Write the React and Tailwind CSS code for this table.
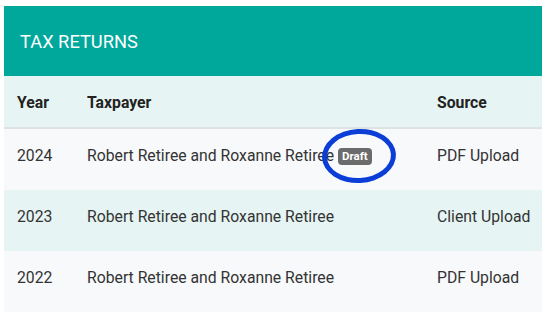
import React from 'react';

const returns = [
  { year: '2024', taxpayer: 'Robert Retiree and Roxanne Retiree', source: 'PDF Upload', draft: true },
  { year: '2023', taxpayer: 'Robert Retiree and Roxanne Retiree', source: 'Client Upload' },
  { year: '2022', taxpayer: 'Robert Retiree and Roxanne Retiree', source: 'PDF Upload' },
];

const cols = 'grid grid-cols-[70px_350px_1fr]';

const App = () => {
  return (
    <div className="w-[542px] h-[321px] bg-white pt-[6px] pl-[4px] font-['Roboto',sans-serif]">
      <div className="relative">
        {/* Header */}
        <div className="h-[70px] bg-[#00a79b] flex items-center px-4">
          <h1 className="text-white text-[18.3px] mt-[1px]">TAX RETURNS</h1>
        </div>

        {/* Column headings */}
        <div className={`${cols} h-[53px] pt-[2px] items-center bg-[#e6f5f3] border-b-2 border-[#dde3e3] text-[15.75px] font-bold text-[#222]`}>
          <div className="pl-[13px]">Year</div>
          <div className="pl-[13px]">Taxpayer</div>
          <div className="pl-[13px]">Source</div>
        </div>

        {/* Rows */}
        {returns.map((r, i) => (
          <div
            key={r.year}
            className={`${cols} h-[61px] pb-[7px] items-center text-[15.75px] text-[#333] ${i % 2 === 1 ? 'bg-[#e6f5f3]' : 'bg-[#f8f9fb]'}`}
          >
            <div className="pl-[13px]">{r.year}</div>
            <div className="pl-[13px] flex items-center whitespace-nowrap">
              {r.taxpayer}
              {r.draft && (
                <span className="ml-[4px] px-[4px] h-[17px] leading-[17px] rounded-[4px] bg-[#6b6b6b] text-white text-[11.5px] font-bold">
                  Draft
                </span>
              )}
            </div>
            <div className="pl-[13px] whitespace-nowrap">{r.source}</div>
          </div>
        ))}

        {/* Highlight ring around the draft badge */}
        <div className="absolute left-[318px] top-[123px] w-[74px] h-[54px] rounded-[50%] border-[5px] border-[#0a3ed6] -rotate-3 pointer-events-none" />
      </div>
    </div>
  );
};

export default App;
